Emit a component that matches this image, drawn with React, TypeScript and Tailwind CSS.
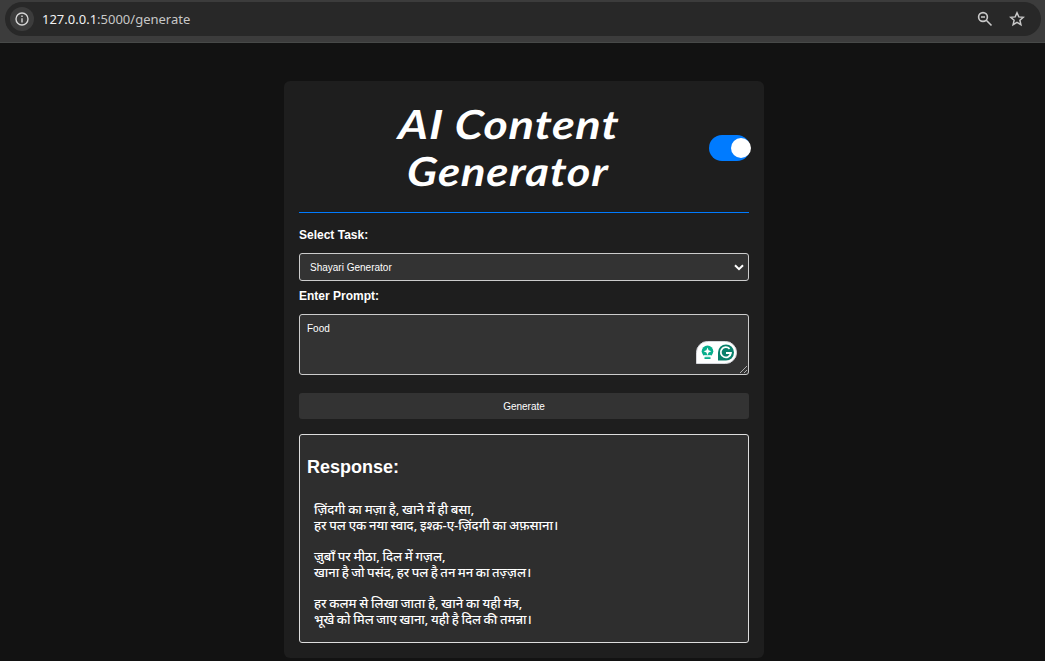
import { useState } from "react";

const verses = [
  [
    { text: "ज़िंदगी का मज़ा है, खाने में ही बसा,", style: "[word-spacing:-0.6px]" },
    { text: "हर पल एक नया स्वाद, इश्क़-ए-ज़िंदगी का अफ़साना।", style: "[word-spacing:-0.6px]" },
  ],
  [
    { text: "ज़ुबाँ पर मीठा, दिल में गज़ल,", style: "[word-spacing:-0.6px]" },
    { text: "खाना है जो पसंद, हर पल है तन मन का तज़्ज़ल।", style: "[word-spacing:-0.9px]" },
  ],
  [
    { text: "हर कलम से लिखा जाता है, खाने का यही मंत्र,", style: "[word-spacing:-0.6px]" },
    { text: "भूखे को मिल जाए खाना, यही है दिल की तमन्ना।", style: "[word-spacing:-0.8px]" },
  ],
];

function AddressBar() {
  return (
    <header className="h-[43px] border-b border-[#474948] bg-[#3c3c3c] pt-0.5 pr-1 pl-[5px]">
      <div className="flex h-[34px] items-center rounded-full bg-[#282828] pr-4 pl-[5px]">
        <span className="flex size-6 items-center justify-center rounded-full bg-[#3c3c3c]">
          <svg className="size-[14px]" viewBox="0 0 14 14" fill="none" stroke="#d5d5d5" strokeWidth="1.4">
            <circle cx="7" cy="7" r="6" />
            <path d="M7 6.2v4.2M7 3.6v1.5" />
          </svg>
        </span>
        <span className="ml-2 font-['Noto_Sans',sans-serif] text-[13px] leading-none text-[#c7c7c7]">
          <span className="text-[#f1f1f1]">127.0.0.1</span>:5000/generate
        </span>
        <svg className="ml-auto size-4" viewBox="0 0 16 16" fill="none" stroke="#c9c9c9" strokeWidth="1.6">
          <circle cx="6" cy="6" r="4.4" />
          <path d="M9.3 9.3l5.2 5.2M4 6h4" />
        </svg>
        <svg className="ml-4 size-4" viewBox="0 0 16 16" fill="none" stroke="#c9c9c9" strokeWidth="1.5">
          <path d="M8 1.8l1.8 4.1 4.5.4-3.4 3 1 4.4L8 11.4l-3.9 2.3 1-4.4-3.4-3 4.5-.4z" />
        </svg>
      </div>
    </header>
  );
}

function WritingAssistant() {
  return (
    <svg className="absolute top-[27px] right-3 h-[23px] w-[41px]" viewBox="0 0 41 23">
      <path d="M11.5.5H29.5a11 11 0 0 1 0 22H.5V11.5a11 11 0 0 1 11-11z" fill="#fff" stroke="#d5d7dc" />
      <circle cx="11.5" cy="10.3" r="5.8" fill="#07ae8c" />
      <path d="M7.5 14.2h8v1.6h-8z" fill="#fff" />
      <path d="M8.5 16.2h6v1.8h-6z" fill="#07ae8c" />
      <path d="M11.5 6.4l1.1 2.8 2.8 1.1-2.8 1.1-1.1 2.8-1.1-2.8-2.8-1.1 2.8-1.1z" fill="#fff" />
      <path d="M22 19.5v-8a8 8 0 1 1 8 8z" fill="#08806b" />
      <path d="M33.6 7.8a5.1 5.1 0 1 0 1.3 4.2H30" fill="none" stroke="#fff" strokeWidth="1.8" />
    </svg>
  );
}

export default function App() {
  const [dark, setDark] = useState(true);
  return (
    <div className="h-[661px] overflow-hidden bg-[#121212] font-['Liberation_Sans',sans-serif] text-white">
      <AddressBar />
      <main className="mt-[38px] ml-[284px] h-[577px] w-[480px] rounded-md bg-[#1e1e1e] px-[15px] pt-5">
        <div className="flex h-28 items-start justify-between border-b border-[#007bff]">
          <h1 className="flex w-[410px] shrink-0 flex-col items-center pl-2 font-['Lato',cursive] text-[40px] leading-[47px] font-bold italic">
            <span className="ml-[3px] block scale-x-[1.15] -skew-x-3 tracking-[1px]">AI Content</span>
            <span className="block scale-x-[1.12] -skew-x-3 tracking-[1px]">Generator</span>
          </h1>
          <button
            aria-label="Dark mode"
            onClick={() => setDark(!dark)}
            className="mt-[34px] -mr-px flex h-[26px] w-[41px] shrink-0 items-center rounded-full bg-[#007bff]"
          >
            <span className="ml-[22px] size-5 shrink-0 rounded-full bg-white" />
          </button>
        </div>
        <label className="mt-[14px] block h-4 text-[12px] leading-4 font-bold">Select Task:</label>
        <div className="relative mt-[10px] h-7">
          <select className="block h-full w-full appearance-none rounded-[3px] border border-[#ccc] bg-[#333] px-[10px] text-[10px] text-white">
            <option>Shayari Generator</option>
          </select>
          <svg className="absolute top-[11px] right-[5px] h-[7px] w-[10px]" viewBox="0 0 10 7" fill="none" stroke="#fff" strokeWidth="2">
            <path d="M1 1.2l4 4 4-4" />
          </svg>
        </div>
        <label className="mt-[7px] block h-4 text-[12px] leading-4 font-bold">Enter Prompt:</label>
        <div className="relative mt-[10px] h-[61px]">
          <textarea
            defaultValue="Food"
            className="block h-full w-full resize-none rounded-[3px] border border-[#ccc] bg-[#333] px-[7px] py-2 text-[10px] leading-[12px] text-white"
          />
          <WritingAssistant />
          <svg className="absolute right-0.5 bottom-0.5 size-[7px]" viewBox="0 0 7 7" stroke="#ccc" strokeWidth=".8">
            <path d="M0 7L7 0M4 7l3-3" />
          </svg>
        </div>
        <button className="mt-[18px] block h-[26px] w-full rounded-[3px] bg-[#333] text-[10px]">Generate</button>
        <section className="mt-[15px] h-[209px] rounded-[3px] border border-[#ddd] bg-[#2e2e2e] px-[7px] pt-[21px]">
          <h2 className="h-[22px] text-[18px] leading-[22px] font-bold">Response:</h2>
          <div className="mt-[23px] ml-[7px] flex flex-col gap-[15px] font-['Noto_Sans',sans-serif] text-[13px] leading-4 font-medium whitespace-nowrap">
            {verses.map((verse) => (
              <p key={verse[0].text} className="flex flex-col items-start">
                {verse.map((line) => (
                  <span key={line.text} className={line.style}>{line.text}</span>
                ))}
              </p>
            ))}
          </div>
        </section>
      </main>
    </div>
  );
}
